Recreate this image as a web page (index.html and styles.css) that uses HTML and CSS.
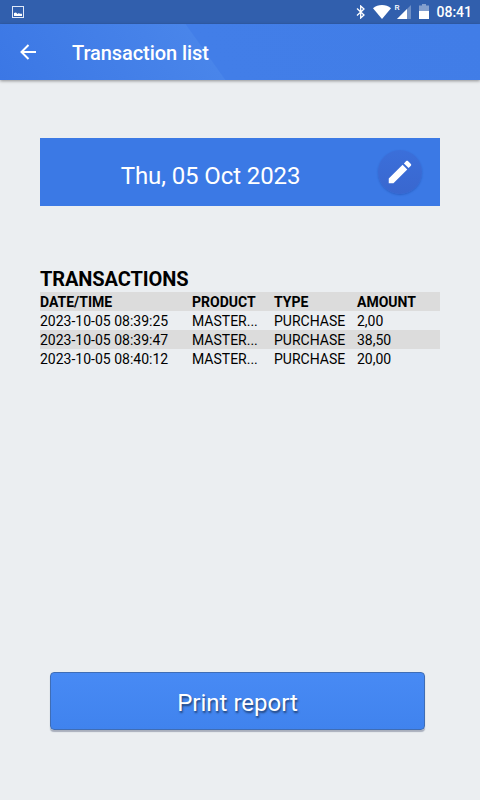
FILE: index.html
```html
<!DOCTYPE html>
<html lang="en">
<head>
    <meta charset="UTF-8">
    <meta name="viewport" content="width=device-width, initial-scale=1.0">
    <title>Transaction list</title>
    <link rel="stylesheet" href="styles.css">
</head>
<body>
    <div class="status-bar">
        <svg class="icon-image" width="12" height="12" viewBox="0 0 12 12">
            <rect x="0.5" y="0.5" width="11" height="11" fill="none" stroke="#dfe8f8"/>
            <path d="M2 10V7L4 6.500L5.500 8L7 7L8 8L9 7.500L10 8V10Z" fill="#fff"/>
        </svg>
        <div class="status-icons">
            <svg class="icon-bluetooth" width="10" height="14" viewBox="0 0 10 14">
                <path d="M1 3.500L8 10L4.700 13V1L8 4L1 10.500" fill="none" stroke="#fff" stroke-width="1.300"/>
            </svg>
            <svg class="icon-wifi" width="18" height="14" viewBox="0 0 18 14">
                <path d="M0 3.200C5 -1 13 -1 18 3.200L9 14Z" fill="#fff"/>
            </svg>
            <span class="roaming">R</span>
            <svg class="icon-signal" width="14" height="14" viewBox="0 0 14 14">
                <path d="M0 14L14 0V14Z" fill="#fff" fill-opacity="0.3"/>
                <path d="M0 14L10 4V14Z" fill="#fff"/>
            </svg>
            <svg class="icon-battery" width="10" height="15" viewBox="0 0 10 15">
                <path d="M0 1.500H3V0H7V1.500H10V7H0Z" fill="#fff" fill-opacity="0.4"/>
                <path d="M0 7H10V15H0Z" fill="#fff"/>
            </svg>
            <span class="clock">08:41</span>
        </div>
    </div>

    <header class="app-bar">
        <svg class="back-arrow" width="16" height="16" viewBox="0 0 16 16">
            <path d="M16 8H1.500M8.500 1L1.500 8L8.500 15" fill="none" stroke="#fff" stroke-width="2"/>
        </svg>
        <h1>Transaction list</h1>
    </header>

    <main class="content">
        <div class="date-box">
            <span class="date">Thu, 05 Oct 2023</span>
            <button class="edit-button" aria-label="Edit date">
                <svg width="30" height="30" viewBox="0 0 24 24">
                    <path d="M3 17.250V21h3.750L17.810 9.940l-3.750-3.750L3 17.250zM20.710 7.040c.390-.390.390-1.020 0-1.410l-2.340-2.340c-.390-.390-1.020-.390-1.410 0l-1.830 1.830 3.750 3.750 1.830-1.830z" fill="#fff"/>
                </svg>
            </button>
        </div>

        <h2>TRANSACTIONS</h2>
        <table class="transactions">
            <thead>
                <tr>
                    <th class="col-date">DATE/TIME</th>
                    <th class="col-product">PRODUCT</th>
                    <th class="col-type">TYPE</th>
                    <th>AMOUNT</th>
                </tr>
            </thead>
            <tbody>
                <tr>
                    <td>2023-10-05 08:39:25</td>
                    <td>MASTER...</td>
                    <td>PURCHASE</td>
                    <td>2,00</td>
                </tr>
                <tr>
                    <td>2023-10-05 08:39:47</td>
                    <td>MASTER...</td>
                    <td>PURCHASE</td>
                    <td>38,50</td>
                </tr>
                <tr>
                    <td>2023-10-05 08:40:12</td>
                    <td>MASTER...</td>
                    <td>PURCHASE</td>
                    <td>20,00</td>
                </tr>
            </tbody>
        </table>

        <button class="print-button">Print report</button>
    </main>
</body>
</html>
```
FILE: styles.css
```css
* {
    box-sizing: border-box;
}

body {
    margin: 0;
    height: 100vh;
    display: flex;
    flex-direction: column;
    font-family: Roboto, sans-serif;
    background: #ebeef1;
    color: #000;
}

.status-bar {
    height: 24px;
    padding: 0 8px 0 12px;
    display: flex;
    align-items: center;
    justify-content: space-between;
    background: #315fad;
    color: #fff;
}

.status-icons {
    display: flex;
    align-items: center;
}

.icon-bluetooth {
    margin-right: 7px;
}

.icon-wifi {
    margin-right: 3px;
}

.roaming {
    width: 3px;
    margin-top: -8px;
    font-size: 8px;
    font-weight: 500;
    line-height: 8px;
}

.icon-signal {
    margin-right: 8px;
}

.icon-battery {
    margin: -2px 7px 0 0;
}

.clock {
    font-size: 14px;
    font-weight: 500;
    line-height: 24px;
}

.app-bar {
    height: 56px;
    padding-left: 20px;
    display: flex;
    align-items: center;
    background: linear-gradient(54.5deg, #3b77e5, #4985ea 183px, #427ee8 184px, #417de7);
    box-shadow: 0 1px 3px rgba(0, 0, 0, 0.4);
    color: #fff;
}

.app-bar h1 {
    margin: 2px 0 0 36px;
    font-size: 20px;
    font-weight: 500;
    letter-spacing: -0.08px;
}

.content {
    flex: 1;
    padding: 58px 40px 69px;
    display: flex;
    flex-direction: column;
}

.date-box {
    height: 68px;
    padding-right: 18px;
    display: flex;
    align-items: center;
    background: #3b79e5;
    color: #fff;
}

.date {
    flex: 1;
    padding: 7px 0 0 3px;
    text-align: center;
    font-size: 24px;
    letter-spacing: -0.1px;
}

.edit-button {
    width: 44px;
    height: 44px;
    padding: 0;
    display: flex;
    align-items: center;
    justify-content: center;
    border: none;
    border-radius: 50%;
    background: linear-gradient(#3b6fda, #3967cf);
    box-shadow: 0 1px 2px rgba(20, 60, 150, 0.4);
}

h2 {
    margin: 61px 0 0;
    font-size: 20px;
    line-height: 25px;
    letter-spacing: -0.1px;
}

.transactions {
    width: 100%;
    table-layout: fixed;
    border-collapse: collapse;
    font-size: 14px;
    line-height: 17px;
    text-align: left;
}

.transactions th,
.transactions td {
    padding: 2px 0 0;
    white-space: nowrap;
}

.transactions thead tr,
.transactions tbody tr:nth-child(even) {
    background: #dcdcdc;
}

.col-date {
    width: 152px;
}

.col-product {
    width: 82px;
}

.col-type {
    width: 83px;
}

.print-button {
    height: 58px;
    margin: auto 15px 1px 10px;
    padding: 4px 0 0;
    border: 1px solid #3f6db5;
    border-radius: 4px;
    background: linear-gradient(#488af4, #4083ee);
    box-shadow: 0 2px 1px rgba(70, 80, 110, 0.4);
    color: #fff;
    font-family: inherit;
    font-size: 24px;
    text-shadow: 1px 2px 2px rgba(0, 0, 0, 0.5);
}
```
